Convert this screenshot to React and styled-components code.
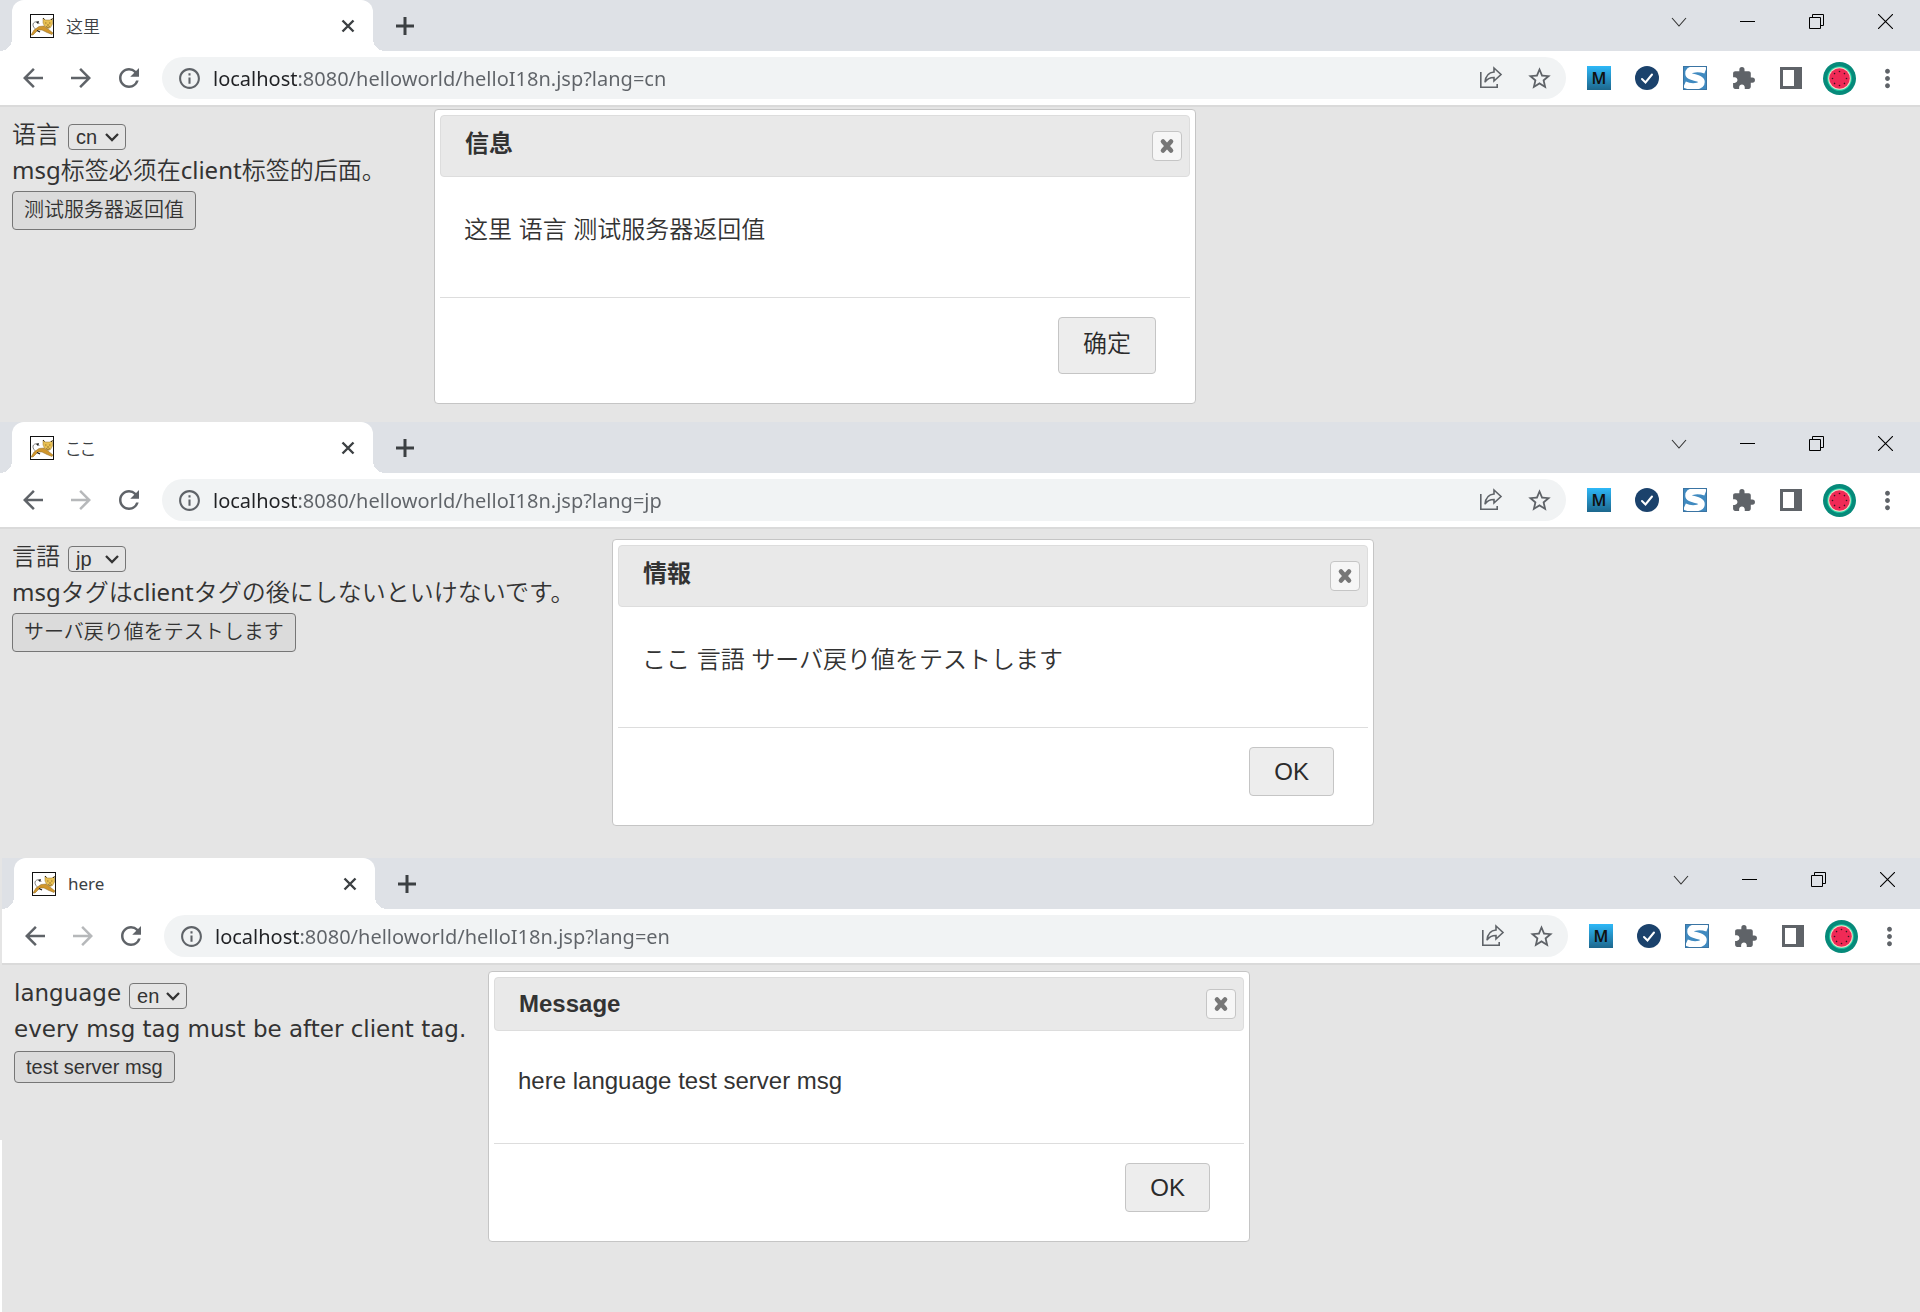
import React from 'react';
import styled, { createGlobalStyle } from 'styled-components';
import { MdArrowBack, MdArrowForward, MdRefresh, MdInfoOutline, MdStarBorder, MdExtension, MdMoreVert } from 'react-icons/md';

const windows = [
    {
        lang: 'cn', htmlLang: 'zh-CN', font: '"Noto Sans CJK SC DemiLight", "Noto Sans CJK SC Light", "Noto Sans CJK SC"', cjk: true, forward: true,
        title: '这里', label: '语言', text: 'msg标签必须在client标签的后面。', button: '测试服务器返回值',
        pageHeight: 315,
        dialog: { left: 434, top: 2, title: '信息', text: '这里 语言 测试服务器返回值', ok: '确定' },
    },
    {
        lang: 'jp', htmlLang: 'ja', font: '"Noto Sans CJK JP DemiLight", "Noto Sans CJK JP Light", "Noto Sans CJK JP"', cjk: true,
        title: 'ここ', label: '言語', text: 'msgタグはclientタグの後にしないといけないです。', button: 'サーバ戻り値をテストします',
        pageHeight: 329,
        dialog: { left: 612, top: 10, title: '情報', text: 'ここ 言語 サーバ戻り値をテストします', ok: 'OK' },
    },
    {
        lang: 'en', htmlLang: 'en', font: '"Noto Sans"', cjk: false, inset: true,
        title: 'here', label: 'language', text: 'every msg tag must be after client tag.', button: 'test server msg',
        pageHeight: 347,
        dialog: { left: 486, top: 6, title: 'Message', text: 'here language test server msg', ok: 'OK' },
    },
];

function CatIcon() {
    return (
        <svg width='24' height='24' viewBox='0 0 24 24' aria-hidden='true'>
            <rect x='0.5' y='0.5' width='23' height='23' fill='#fff' stroke='#111'/>
            <path d='M9 10C9 7 4 7 3 10C2.500 13 5 14 6 16' fill='none' stroke='#777' strokeWidth='0.9'/>
            <path d='M6 8L9 7L8 10Z' fill='#222'/>
            <path d='M1 21L4 16L9 12.500L14 12L18 15L23 19L22 20.500L17 18.500L12 16L8 16L3 21Z' fill='#d1962c' stroke='#8a6a28' strokeWidth='0.5'/>
            <path d='M7 16.500L10 18' stroke='#111' strokeWidth='1.200'/>
            <path d='M13 4L15.500 6H19.500L22.500 4.500L22.500 10L20.500 13.500L18 14.500L14.500 12L13 9Z' fill='#e8c052' stroke='#9a7a38' strokeWidth='0.5'/>
            <path d='M15 9H16.500M19 9H20.500M18 10V12M16 12.500L18 13.500L20 12.500' fill='none' stroke='#7a5a20' strokeWidth='0.7'/>
            <path d='M13 4L14.500 5.500M22.500 4.500L21 6' stroke='#222' strokeWidth='0.9'/>
        </svg>
    );
}

function ShareIcon() {
    return (
        <svg width='24' height='24' viewBox='0 0 24 24' fill='none' stroke='#5f6368' strokeWidth='1.6' aria-hidden='true'>
            <path d='M1.8 6V21.2H18.2V18'/>
            <path d='M15 2L22 8.5L15 15V11.5C10.5 11.5 8 13 6 16.2C6.5 10.5 9.5 6.5 15 6Z'/>
        </svg>
    );
}

function CheckIcon() {
    return (
        <svg width='24' height='24' viewBox='0 0 24 24' aria-hidden='true'>
            <circle cx='12' cy='12' r='12' fill='#1b426c'/>
            <path d='M7 13L10.5 16.5L17 8.5' fill='none' stroke='#fff' strokeWidth='2' strokeLinecap='round'/>
        </svg>
    );
}

function SwirlIcon() {
    return (
        <svg width='24' height='24' viewBox='0 0 24 24' aria-hidden='true'>
            <rect width='24' height='24' fill='#408ac0'/>
            <path d='M22.500 4.500C17 2.500 5.500 2 5.500 7.500C5.500 12.500 18.500 10.500 18.500 16C18.500 21 8 21.500 1.500 18.500' fill='none' stroke='#fff' strokeWidth='6.500'/>
            <rect x='0.5' y='0.5' width='23' height='23' fill='none' stroke='#3a74a3'/>
        </svg>
    );
}

function PanelIcon() {
    return (
        <svg width='22' height='22' viewBox='0 0 22 22' aria-hidden='true'>
            <path fill='#5f6368' fillRule='evenodd' d='M0 0H22V22H0ZM3 3V19H14V3Z'/>
        </svg>
    );
}

function MelonIcon() {
    const seeds = [0, 45, 90, 135, 180, 225, 270, 315];
    return (
        <svg width='33' height='33' viewBox='0 0 33 33' aria-hidden='true'>
            <circle cx='16.5' cy='16.5' r='16.5' fill='#068a7a'/>
            <circle cx='16.5' cy='16.5' r='12.3' fill='#1fd1a5'/>
            <circle cx='16.5' cy='16.5' r='11.3' fill='#f3dcc9'/>
            <circle cx='16.5' cy='16.5' r='10.3' fill='#f02a56'/>
            {seeds.map((a) => (
                <circle key={a} cx='16.5' cy='9.5' r='0.8' fill='#3a1420' transform={`rotate(${a} 16.5 16.5)`}/>
            ))}
        </svg>
    );
}

function Dialog({ dialog, cjk }) {
    return (
        <DialogBox $left={dialog.left} $top={dialog.top} role='dialog' aria-label={dialog.title}>
            <TitleBar>
                <DialogTitle $cjk={cjk}>{dialog.title}</DialogTitle>
                <CloseButton aria-label='Close'>
                    <svg width='16' height='16' viewBox='0 0 16 16' aria-hidden='true'>
                        <path d='M4 3.5L12 12.5M12 3.5L4 12.5' stroke='#777' strokeWidth='4.6' strokeLinecap='round'/>
                    </svg>
                </CloseButton>
            </TitleBar>
            <DialogText $cjk={cjk}>{dialog.text}</DialogText>
            <ButtonPane>
                <OkButton $cjk={dialog.ok !== 'OK'}>{dialog.ok}</OkButton>
            </ButtonPane>
        </DialogBox>
    );
}

function Browser({ win }) {
    const id = `lang-${win.lang}`;
    return (
        <Window $inset={win.inset} $font={win.font} lang={win.htmlLang}>
            <TabStrip>
                <Tab>
                    <CatIcon/>
                    <TabTitle>{win.title}</TabTitle>
                    <TabButton aria-label='Close tab'>
                        <svg width='14' height='14' viewBox='0 0 14 14' aria-hidden='true'>
                            <path d='M1.5 1.5L12.5 12.5M12.5 1.5L1.5 12.5' stroke='#3c4043' strokeWidth='2.4'/>
                        </svg>
                    </TabButton>
                </Tab>
                <NewTab aria-label='New tab'>
                    <svg width='18' height='18' viewBox='0 0 18 18' aria-hidden='true'>
                        <path d='M9 0V18M0 9H18' stroke='#3c4043' strokeWidth='3'/>
                    </svg>
                </NewTab>
                <Controls>
                    <ControlButton aria-label='Search tabs'>
                        <svg width='16' height='16' viewBox='0 0 16 16' aria-hidden='true'><path d='M1 4L8 12L15 4' fill='none' stroke='#333' strokeWidth='1.1'/></svg>
                    </ControlButton>
                    <ControlButton aria-label='Minimize'>
                        <svg width='15' height='15' viewBox='0 0 15 15' aria-hidden='true'><path d='M0 7.5H15' stroke='#000'/></svg>
                    </ControlButton>
                    <ControlButton aria-label='Restore'>
                        <svg width='15' height='15' viewBox='0 0 15 15' fill='none' stroke='#000' aria-hidden='true'><path d='M0.5 3.5H11.5V14.5H0.5ZM3.5 3V0.5H14.5V11.5H12'/></svg>
                    </ControlButton>
                    <ControlButton aria-label='Close window'>
                        <svg width='15' height='15' viewBox='0 0 15 15' aria-hidden='true'><path d='M0 0L15 15M15 0L0 15' stroke='#000' strokeWidth='1.1'/></svg>
                    </ControlButton>
                </Controls>
            </TabStrip>
            <Toolbar>
                <ToolButton aria-label='Back'><MdArrowBack size={30}/></ToolButton>
                <ToolButton aria-label='Forward' $dim={!win.forward}><MdArrowForward size={30}/></ToolButton>
                <ToolButton aria-label='Reload'><MdRefresh size={30}/></ToolButton>
                <Omnibox>
                    <MdInfoOutline size={25}/>
                    <Address aria-label='Address' readOnly value={`localhost:8080/helloworld/helloI18n.jsp?lang=${win.lang}`}/>
                    <ToolButton aria-label='Share'><ShareIcon/></ToolButton>
                    <ToolButton aria-label='Bookmark'><MdStarBorder size={27}/></ToolButton>
                </Omnibox>
                <ToolButton><MBadge>M</MBadge></ToolButton>
                <ToolButton aria-label='Check'><CheckIcon/></ToolButton>
                <ToolButton aria-label='Search'><SwirlIcon/></ToolButton>
                <ToolButton aria-label='Extensions'><MdExtension size={25}/></ToolButton>
                <ToolButton aria-label='Side panel'><PanelIcon/></ToolButton>
                <ToolButton aria-label='Profile'><MelonIcon/></ToolButton>
                <ToolButton aria-label='Menu'><MdMoreVert size={29}/></ToolButton>
            </Toolbar>
            <Page $height={win.pageHeight} $cjk={win.cjk}>
                <Line>
                    <label htmlFor={id}>{win.label}</label>
                    <SelectBox>
                        <Select id={id} defaultValue={win.lang}>
                            <option value='cn'>cn</option>
                            <option value='jp'>jp</option>
                            <option value='en'>en</option>
                        </Select>
                        <svg width='14' height='9' viewBox='0 0 14 9' aria-hidden='true'><path d='M1 1L7 7L13 1' fill='none' stroke='#333' strokeWidth='2.3'/></svg>
                    </SelectBox>
                </Line>
                <Line>{win.text}</Line>
                <ButtonLine $cjk={win.cjk}>
                    <TestButton $cjk={win.cjk}>{win.button}</TestButton>
                </ButtonLine>
                <Dialog dialog={win.dialog} cjk={win.cjk}/>
            </Page>
        </Window>
    );
}

function App() {
    return (
        <Screen>
            <GlobalStyle/>
            {windows.map((win) => <Browser key={win.lang} win={win}/>)}
        </Screen>
    );
}

export default App;

const GlobalStyle = createGlobalStyle`
    * {
        box-sizing:border-box;
    }
    body {
        margin:0;
        background-color:rgb(229,229,229);
    }
    button {
        padding:0;
        border:0;
        background:none;
        color:inherit;
        font-family:inherit;
    }
    svg {
        display:block;
        flex:none;
    }
`;

const Screen = styled.main`
    overflow:hidden;
`;

const Window = styled.section`
    width:100%;
    font-family:"Noto Sans", ${(props) => props.$font}, sans-serif;
    --cjk:${(props) => props.$font};
    ${(props) => props.$inset && `
        width:calc(100% + 2px);
        border-left:2px solid;
        border-image:linear-gradient(rgb(229,229,229) 282px, white 282px) 0 0 0 2;
    `}
`;

const TabStrip = styled.div`
    display:flex;
    align-items:stretch;
    height:51px;
    padding-left:12px;
    background-color:rgb(222,225,230);
`;

const Tab = styled.div`
    position:relative;
    display:flex;
    align-items:center;
    gap:12px;
    width:361px;
    padding:0 13px 0 18px;
    border-radius:12px 12px 0 0;
    background-color:white;

    &::before, &::after {
        content:'';
        position:absolute;
        bottom:0;
        width:12px;
        height:12px;
    }
    &::before {
        left:-12px;
        background:radial-gradient(circle at 0 0, transparent 12px, white 12px);
    }
    &::after {
        right:-12px;
        background:radial-gradient(circle at 100% 0, transparent 12px, white 12px);
    }
`;

const TabTitle = styled.span`
    flex:1;
    font-size:17px;
    font-feature-settings:"palt";
    color:rgb(60,64,67);
`;

const TabButton = styled.button`
    display:grid;
    place-items:center;
    width:24px;
    height:24px;
`;

const NewTab = styled.button`
    display:grid;
    place-items:center;
    width:64px;
`;

const Controls = styled.div`
    display:flex;
    align-items:flex-start;
    margin-left:auto;
`;

const ControlButton = styled.button`
    display:grid;
    place-items:center;
    width:69px;
    height:43px;
`;

const Toolbar = styled.div`
    display:flex;
    align-items:center;
    height:56px;
    padding:0 9px;
    border-bottom:2px solid rgb(218,218,218);
    background-color:white;
    color:rgb(95,99,104);
`;

const ToolButton = styled.button`
    display:grid;
    place-items:center;
    flex:none;
    width:48px;
    height:42px;
    opacity:${(props) => (props.$dim ? 0.45 : 1)};
`;

const Omnibox = styled.div`
    flex:1;
    display:flex;
    align-items:center;
    height:42px;
    margin:0 9px;
    padding:0 3px 0 15px;
    border-radius:21px;
    background-color:rgb(241,243,244);
`;

const Address = styled.input`
    flex:1;
    min-width:0;
    margin-left:11px;
    padding:0;
    border:0;
    outline:0;
    font-family:"Noto Sans", sans-serif;
    font-size:20px;
    background:linear-gradient(to right, rgb(32,33,36) 86px, rgb(95,99,104) 86px);
    background-clip:text;
    color:transparent;
`;

const MBadge = styled.span`
    width:24px;
    height:24px;
    background:linear-gradient(rgb(45,184,248), rgb(29,103,141));
    color:rgb(17,17,17);
    font-size:16px;
    font-weight:600;
    line-height:24px;
    text-align:center;
`;

const Page = styled.div`
    position:relative;
    min-height:${(props) => props.$height}px;
    padding:${(props) => (props.$cjk ? '9px' : '10px')} 12px 0;
    background-color:rgb(229,229,229);
    color:rgb(51,51,51);
    font-family:${(props) => (props.$cjk ? '"Noto Sans", var(--cjk)' : '"DejaVu Sans"')}, sans-serif;
    font-size:${(props) => (props.$cjk ? '24px' : '23px')};
`;

const Line = styled.div`
    display:flex;
    align-items:center;
    gap:8px;
    height:36px;
    line-height:36px;
    white-space:nowrap;
`;

const SelectBox = styled.div`
    position:relative;
    margin-top:5px;

    svg {
        position:absolute;
        top:9px;
        right:7px;
        pointer-events:none;
    }
`;

const Select = styled.select`
    display:block;
    appearance:none;
    width:58px;
    height:26px;
    padding:0 0 0 7px;
    border:1px solid rgb(118,118,118);
    border-radius:4px;
    background-color:transparent;
    color:rgb(51,51,51);
    font-family:"Liberation Sans", sans-serif;
    font-size:20px;
    line-height:24px;
`;

const ButtonLine = styled.div`
    display:flex;
    align-items:center;
    height:${(props) => (props.$cjk ? '45px' : '39px')};
`;

const TestButton = styled.button`
    padding:0 11px;
    border:1px solid rgb(118,118,118);
    border-radius:4px;
    background-color:rgb(219,219,219);
    font-family:"Liberation Sans", var(--cjk), sans-serif;
    font-size:20px;
    line-height:${(props) => (props.$cjk ? '37px' : '30px')};
`;

const DialogBox = styled.div`
    position:absolute;
    left:${(props) => props.$left}px;
    top:${(props) => props.$top}px;
    width:762px;
    padding:5px;
    border:1px solid rgb(197,197,197);
    border-radius:4px;
    background-color:white;
    font-family:"Liberation Sans", var(--cjk), sans-serif;
    font-size:24px;
`;

const TitleBar = styled.div`
    display:flex;
    align-items:center;
    justify-content:space-between;
    padding:11px 7px 11px 24px;
    border:1px solid rgb(221,221,221);
    border-radius:4px;
    background-color:rgb(233,233,233);
`;

const DialogTitle = styled.span`
    padding-bottom:${(props) => (props.$cjk ? '4px' : '0')};
    font-family:"Liberation Sans", ${(props) => props.$cjk && '"Noto Sans CJK SC", "Noto Sans CJK JP",'} sans-serif;
    font-weight:700;
    line-height:${(props) => (props.$cjk ? '34px' : '30px')};
`;

const CloseButton = styled.button`
    display:grid;
    place-items:center;
    width:30px;
    height:30px;
    border:1px solid rgb(197,197,197);
    border-radius:4px;
    background-color:rgb(246,246,246);
`;

const DialogText = styled.div`
    padding:${(props) => (props.$cjk ? '35px 24px 49px' : '36px 24px 48px')};
    line-height:${(props) => (props.$cjk ? '36px' : '28px')};
`;

const ButtonPane = styled.div`
    display:flex;
    justify-content:flex-end;
    padding:19px 34px 24px;
    border-top:1px solid rgb(221,221,221);
`;

const OkButton = styled.button`
    padding:${(props) => (props.$cjk ? '8px 24px 11px' : '10px 24px 9px')};
    border:1px solid rgb(197,197,197);
    border-radius:4px;
    background-color:rgb(237,237,237);
    color:rgb(43,43,43);
    font-size:24px;
    line-height:${(props) => (props.$cjk ? '36px' : '28px')};
`;
